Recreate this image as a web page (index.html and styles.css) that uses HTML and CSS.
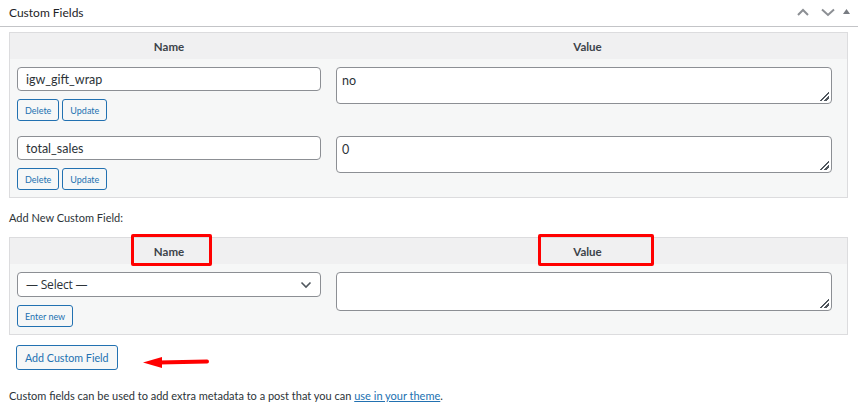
FILE: index.html
```html
<!DOCTYPE html>
<html>
<head>
<meta charset="utf-8">
<link rel="stylesheet" href="styles.css">
</head>
<body>
<div class="postbox">
  <div class="pb-header">
    <h2 class="pb-title">Custom Fields</h2>
    <div class="pb-actions">
      <svg class="ic up" width="14" height="10" viewBox="0 0 14 10"><polyline points="2,8 7,3 12,8" fill="none" stroke="#8c8f94" stroke-width="2"/></svg>
      <svg class="ic down" width="14" height="10" viewBox="0 0 14 10"><polyline points="1,2.5 7,8 13,2.5" fill="none" stroke="#8c8f94" stroke-width="2"/></svg>
      <svg class="ic tri" width="7" height="6" viewBox="0 0 7 6"><polygon points="3.5,0 7,5 0,5" fill="#787c82"/></svg>
    </div>
  </div>
  <div class="inside">
    <div class="meta-table">
      <div class="mt-head">
        <div class="th">Name</div>
        <div class="th">Value</div>
      </div>
      <div class="mt-row">
        <div class="cell-left">
          <div class="text-input">igw_gift_wrap</div>
          <div class="btns">
            <span class="btn-small">Delete</span>
            <span class="btn-small">Update</span>
          </div>
        </div>
        <div class="cell-right">
          <div class="textarea">no<span class="grip"></span></div>
        </div>
      </div>
      <div class="mt-row last">
        <div class="cell-left">
          <div class="text-input">total_sales</div>
          <div class="btns">
            <span class="btn-small">Delete</span>
            <span class="btn-small">Update</span>
          </div>
        </div>
        <div class="cell-right">
          <div class="textarea">0<span class="grip"></span></div>
        </div>
      </div>
    </div>

    <p class="add-new">Add New Custom Field:</p>

    <div class="meta-table new-table">
      <div class="mt-head">
        <div class="th"><span class="mark mark-name"></span>Name</div>
        <div class="th"><span class="mark mark-value"></span>Value</div>
      </div>
      <div class="mt-row last">
        <div class="cell-left">
          <div class="text-input select"><span class="sel-text">— Select —</span>
            <svg class="caret" width="12" height="8" viewBox="0 0 12 8"><polyline points="1.5,1.5 6,6 10.5,1.5" fill="none" stroke="#50575e" stroke-width="1.6"/></svg>
          </div>
          <div class="btns">
            <span class="btn-small">Enter new</span>
          </div>
        </div>
        <div class="cell-right">
          <div class="textarea tall"><span class="grip"></span></div>
        </div>
      </div>
    </div>

    <div class="submit-row">
      <span class="btn-add">Add Custom Field</span>
      <svg class="arrow" width="68" height="14" viewBox="0 0 68 14"><line x1="16" y1="6.5" x2="64" y2="5.5" stroke="#ff0000" stroke-width="4" stroke-linecap="round"/><polygon points="0,6.5 19,1 19,12" fill="#ff0000"/></svg>
    </div>

    <p class="foot">Custom fields can be used to add extra metadata to a post that you can <a href="#">use in your theme</a>.</p>
  </div>
</div>
</body>
</html>
```

FILE: styles.css
```css
* { box-sizing: border-box; }
html, body { margin: 0; padding: 0; background: #ffffff; }
body {
  font-family: Lato, "Open Sans", sans-serif;
  font-size: 11px;
  color: #1d2327;
  width: 858px;
  height: 414px;
  overflow: hidden;
}
.pb-header {
  height: 27px;
  border-bottom: 1px solid #c3c4c7;
  display: flex;
  align-items: center;
  justify-content: space-between;
  padding: 0 8px 2px 9px;
}
.pb-title {
  margin: 0;
  font-size: 12px;
  font-weight: 400;
  color: #1d2327;
}
.pb-actions {
  display: flex;
  align-items: center;
}
.pb-actions .down { margin-left: 11px; }
.pb-actions .tri { margin-left: 8px; margin-top: -1px; }
.inside {
  padding: 5px 10px 0 9px;
}
.meta-table {
  border: 1px solid #dcdcde;
  background: #f6f7f7;
  width: 839px;
}
.mt-head {
  display: grid;
  grid-template-columns: 318px 1fr;
  background: #f0f0f1;
  height: 26px;
}
.th {
  position: relative;
  display: flex;
  align-items: center;
  justify-content: center;
  font-weight: 700;
  font-size: 11.5px;
  color: #3c434a;
}
.mt-row {
  display: grid;
  grid-template-columns: 318px 1fr;
  padding: 8px 0 7px;
}
.cell-left { padding-left: 7px; }
.cell-right { padding-left: 8px; padding-right: 15px; }
.text-input {
  width: 304px;
  height: 24px;
  border: 1px solid #8c8f94;
  border-radius: 4px;
  background: #fff;
  padding: 0 8px;
  display: flex;
  align-items: center;
  font-size: 12.5px;
  color: #2c3338;
}
.select { justify-content: space-between; height: 25px; }
.sel-text { font-family: "Open Sans", sans-serif; font-size: 12px; letter-spacing: -0.2px; }
.btns {
  display: flex;
  gap: 3px;
  margin-top: 8px;
}
.btn-small {
  display: inline-flex;
  align-items: center;
  height: 22px;
  padding: 0 7px;
  border: 1px solid #2271b1;
  border-radius: 3px;
  background: #f6f7f7;
  color: #2271b1;
  font-size: 9px;
}
.textarea {
  position: relative;
  height: 37px;
  border: 1px solid #8c8f94;
  border-radius: 4px;
  background: #fff;
  padding: 5px 5px;
  font-size: 12.5px;
  color: #2c3338;
  line-height: 1.2;
}
.textarea.tall { height: 39px; }
.grip {
  position: absolute;
  right: 2px;
  bottom: 2px;
  width: 9px;
  height: 9px;
  background:
    linear-gradient(135deg, transparent 45%, #50575e 45%, #50575e 58%, transparent 58%),
    linear-gradient(135deg, transparent 72%, #50575e 72%, #50575e 85%, transparent 85%);
}
.add-new {
  margin: 0;
  padding: 12px 0 11px;
  font-size: 11px;
  line-height: 16px;
  color: #2c3338;
}
.mark {
  position: absolute;
  top: -4px;
  height: 32px;
  border: 3px solid #ff0000;
  border-radius: 2px;
}
.mark-name { left: 121px; width: 81px; }
.mark-value { left: 210px; width: 116px; }
.submit-row {
  display: flex;
  align-items: center;
  padding: 10px 0 0 7px;
  height: 35px;
}
.btn-add {
  display: inline-flex;
  align-items: center;
  height: 25px;
  padding: 0 8px;
  border: 1px solid #2271b1;
  border-radius: 3px;
  background: #f6f7f7;
  color: #2271b1;
  font-size: 10.7px;
}
.arrow { margin-left: 25px; margin-top: 10px; }
.foot {
  margin: 0;
  padding-top: 19px;
  font-size: 11px;
  color: #2c3338;
}
.foot a { color: #2271b1; text-decoration: underline; }
```
